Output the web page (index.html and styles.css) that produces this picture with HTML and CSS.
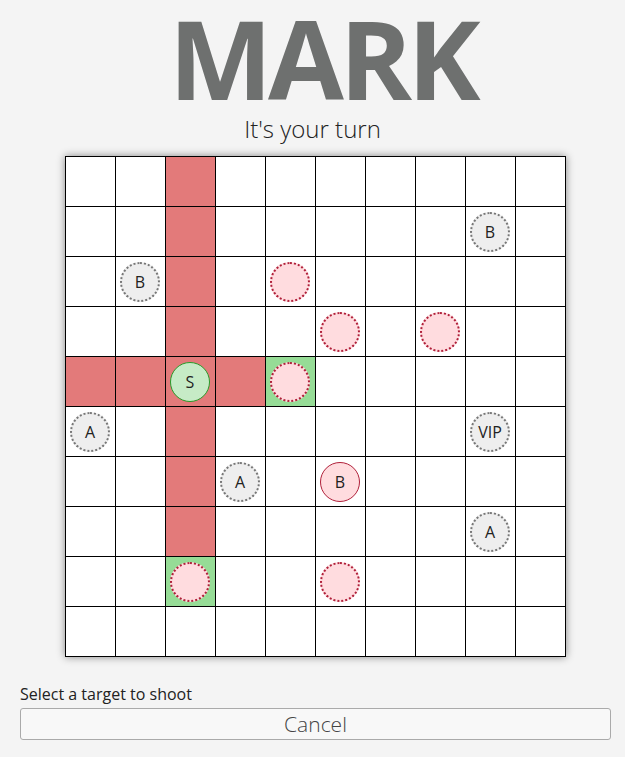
FILE: index.html
```html
<!DOCTYPE html>
<html>
<head>
<meta charset="utf-8">
<link rel="stylesheet" href="styles.css">
</head>
<body>
<h1 class="title">MARK</h1>
<p class="turn">It's your turn</p>
<div class="board-wrap">
<div class="board">
  <div class="cell"></div><div class="cell"></div><div class="cell red"></div><div class="cell"></div><div class="cell"></div><div class="cell"></div><div class="cell"></div><div class="cell"></div><div class="cell"></div><div class="cell"></div>

  <div class="cell"></div><div class="cell"></div><div class="cell red"></div><div class="cell"></div><div class="cell"></div><div class="cell"></div><div class="cell"></div><div class="cell"></div><div class="cell"><span class="piece other">B</span></div><div class="cell"></div>

  <div class="cell"></div><div class="cell"><span class="piece other">B</span></div><div class="cell red"></div><div class="cell"></div><div class="cell"><span class="piece target"></span></div><div class="cell"></div><div class="cell"></div><div class="cell"></div><div class="cell"></div><div class="cell"></div>

  <div class="cell"></div><div class="cell"></div><div class="cell red"></div><div class="cell"></div><div class="cell"></div><div class="cell"><span class="piece target"></span></div><div class="cell"></div><div class="cell"><span class="piece target"></span></div><div class="cell"></div><div class="cell"></div>

  <div class="cell red"></div><div class="cell red"></div><div class="cell red"><span class="piece self">S</span></div><div class="cell red"></div><div class="cell green"><span class="piece target"></span></div><div class="cell"></div><div class="cell"></div><div class="cell"></div><div class="cell"></div><div class="cell"></div>

  <div class="cell"><span class="piece other">A</span></div><div class="cell"></div><div class="cell red"></div><div class="cell"></div><div class="cell"></div><div class="cell"></div><div class="cell"></div><div class="cell"></div><div class="cell"><span class="piece other">VIP</span></div><div class="cell"></div>

  <div class="cell"></div><div class="cell"></div><div class="cell red"></div><div class="cell"><span class="piece other">A</span></div><div class="cell"></div><div class="cell"><span class="piece enemy">B</span></div><div class="cell"></div><div class="cell"></div><div class="cell"></div><div class="cell"></div>

  <div class="cell"></div><div class="cell"></div><div class="cell red"></div><div class="cell"></div><div class="cell"></div><div class="cell"></div><div class="cell"></div><div class="cell"></div><div class="cell"><span class="piece other">A</span></div><div class="cell"></div>

  <div class="cell"></div><div class="cell"></div><div class="cell green"><span class="piece target"></span></div><div class="cell"></div><div class="cell"></div><div class="cell"><span class="piece target"></span></div><div class="cell"></div><div class="cell"></div><div class="cell"></div><div class="cell"></div>

  <div class="cell"></div><div class="cell"></div><div class="cell"></div><div class="cell"></div><div class="cell"></div><div class="cell"></div><div class="cell"></div><div class="cell"></div><div class="cell"></div><div class="cell"></div>
</div>
</div>
<div class="controls">
  <p class="hint">Select a target to shoot</p>
  <button class="cancel">Cancel</button>
</div>
</body>
</html>
```

FILE: styles.css
```css
html, body {
  margin: 0;
  padding: 0;
  background: #f4f4f4;
  font-family: "Open Sans", "DejaVu Sans", sans-serif;
}

.title {
  margin: 0;
  padding-left: 20px;
  text-align: center;
  font-size: 110px;
  line-height: 114px;
  font-weight: 700;
  color: #6e706f;
  letter-spacing: -4.5px;
}

.turn {
  margin: 0;
  text-align: center;
  font-size: 24px;
  line-height: 30px;
  font-weight: 300;
  color: #222;
}

.board-wrap {
  display: flex;
  justify-content: center;
  padding-left: 5px;
  margin-top: 12px;
}

.board {
  display: grid;
  grid-template-columns: repeat(10, 50px);
  grid-auto-rows: 50px;
  border-left: 1px solid #000;
  border-top: 1px solid #000;
  background: #fff;
  box-shadow: 0 0 8px rgba(0, 0, 0, 0.45);
}

.cell {
  border-right: 1px solid #000;
  border-bottom: 1px solid #000;
  display: flex;
  align-items: center;
  justify-content: center;
  background: #fff;
}

.cell.red { background: #e37a7a; }
.cell.green { background: #96dc96; }

.piece {
  box-sizing: border-box;
  width: 40px;
  height: 40px;
  border-radius: 50%;
  display: flex;
  align-items: center;
  justify-content: center;
  font-size: 16px;
  color: #222;
}

.piece.other {
  background: #eeeeee;
  border: 2px dotted #777;
}

.piece.target {
  background: #ffdcdf;
  border: 2px dotted #b0203a;
}

.piece.enemy {
  background: #ffdcdf;
  border: 1px solid #b0203a;
}

.piece.self {
  background: #c6ebc6;
  border: 1px solid #2a9a2a;
}

.controls {
  padding: 0 14px 0 20px;
  margin-top: 26px;
}

.hint {
  margin: 0 0 3px;
  font-size: 16px;
  line-height: 22px;
  color: #222;
}

.cancel {
  display: block;
  width: 100%;
  height: 32px;
  background: #f8f8f8;
  border: 1px solid #aaa;
  border-radius: 3px;
  font-family: "Open Sans", "DejaVu Sans", sans-serif;
  font-size: 21px;
  font-weight: 300;
  color: #444;
  padding: 0;
}
```
